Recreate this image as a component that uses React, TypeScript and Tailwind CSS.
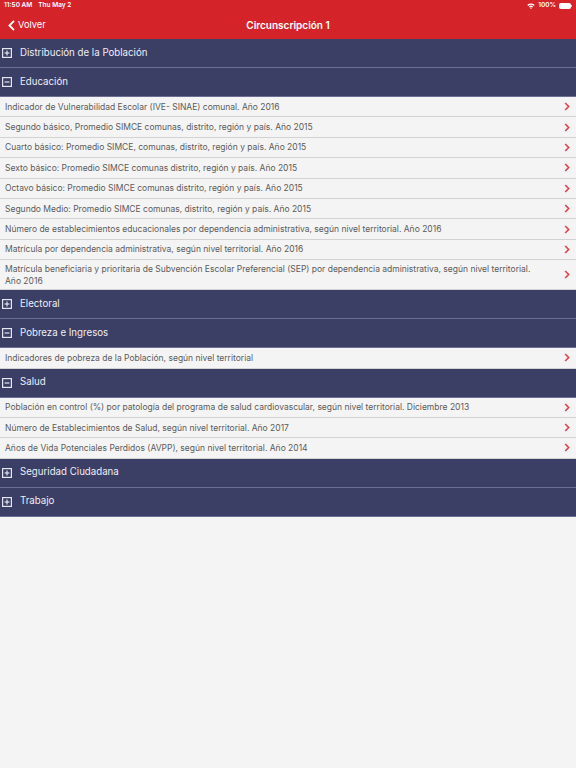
const SECTIONS: { title: string; open: boolean; items: string[] }[] = [
  { title: 'Distribución de la Población', open: false, items: [] },
  {
    title: 'Educación',
    open: true,
    items: [
      'Indicador de Vulnerabilidad Escolar (IVE- SINAE) comunal. Año 2016',
      'Segundo básico, Promedio SIMCE comunas, distrito, región y país. Año 2015',
      'Cuarto básico: Promedio SIMCE, comunas, distrito, región y país. Año 2015',
      'Sexto básico: Promedio SIMCE comunas distrito, región y país. Año 2015',
      'Octavo básico: Promedio SIMCE comunas distrito, región y país. Año 2015',
      'Segundo Medio: Promedio SIMCE comunas, distrito, región y país. Año 2015',
      'Número de establecimientos educacionales por dependencia administrativa, según nivel territorial. Año 2016',
      'Matrícula por dependencia administrativa, según nivel territorial. Año 2016',
      'Matrícula beneficiaria y prioritaria de Subvención Escolar Preferencial (SEP) por dependencia administrativa, según nivel territorial. Año 2016',
    ],
  },
  { title: 'Electoral', open: false, items: [] },
  {
    title: 'Pobreza e Ingresos',
    open: true,
    items: ['Indicadores de pobreza de la Población, según nivel territorial'],
  },
  {
    title: 'Salud',
    open: true,
    items: [
      'Población en control (%) por patología del programa de salud cardiovascular, según nivel territorial. Diciembre 2013',
      'Número de Establecimientos de Salud, según nivel territorial. Año 2017',
      'Años de Vida Potenciales Perdidos (AVPP), según nivel territorial. Año 2014',
    ],
  },
  { title: 'Seguridad Ciudadana', open: false, items: [] },
  { title: 'Trabajo', open: false, items: [] },
];

function ToggleBox({ open }: { open: boolean }) {
  return (
    <svg width="10" height="10" viewBox="0 0 10 10" className="shrink-0">
      <rect x="0.6" y="0.6" width="8.8" height="8.8" fill="none" stroke="#e6e6ee" strokeWidth="1.2" />
      <line x1="2.6" y1="5" x2="7.4" y2="5" stroke="#e6e6ee" strokeWidth="1.2" />
      {!open && <line x1="5" y1="2.6" x2="5" y2="7.4" stroke="#e6e6ee" strokeWidth="1.2" />}
    </svg>
  );
}

function Chevron() {
  return (
    <svg width="6" height="9" viewBox="0 0 6 9" className="shrink-0">
      <path d="M1.2 1 L4.6 4.5 L1.2 8" fill="none" stroke="#e0464d" strokeWidth="1.7" />
    </svg>
  );
}

export default function App() {
  return (
    <div className="min-h-[768px] w-[576px] bg-[#f4f4f4] font-['Inter',sans-serif]">
      {/* Nav bar with status strip */}
      <div className="h-[39px] bg-[#d42429] text-white">
        <div className="flex h-[11px] items-center justify-between px-[4px] text-[6.5px] font-semibold">
          <div className="flex gap-[6px]">
            <span>11:50 AM</span>
            <span>Thu May 2</span>
          </div>
          <div className="flex items-center gap-[3px]">
            <svg width="8" height="6" viewBox="0 0 8 6">
              <path d="M0.3 2 A5.5 5.5 0 0 1 7.7 2 L6.8 2.9 A4.2 4.2 0 0 0 1.2 2.9 Z" fill="#fff" />
              <path d="M1.9 3.6 A3 3 0 0 1 6.1 3.6 L5.2 4.5 A1.8 1.8 0 0 0 2.8 4.5 Z" fill="#fff" />
              <circle cx="4" cy="5.3" r="0.7" fill="#fff" />
            </svg>
            <span>100%</span>
            <div className="flex items-center">
              <div className="h-[6px] w-[12px] rounded-[1.5px] border border-white bg-white" />
              <div className="h-[2px] w-[1px] bg-white/70" />
            </div>
          </div>
        </div>
        <div className="relative flex h-[28px] items-center">
          <div className="flex items-center gap-[3px] pl-[8px] text-[9.3px]">
            <svg width="7" height="11" viewBox="0 0 7 11">
              <path d="M6 0.8 L1.4 5.5 L6 10.2" fill="none" stroke="#fff" strokeWidth="1.8" />
            </svg>
            <span>Volver</span>
          </div>
          <div className="absolute inset-x-0 text-center text-[10px] font-semibold">Circunscripción 1</div>
        </div>
      </div>

      {SECTIONS.map((s) => (
        <div key={s.title}>
          <div className="flex h-[29px] items-center gap-[8px] border-b border-[#6c6f93] bg-[#3b3e65] pl-[2px] text-[9.7px] text-[#eeeef4]">
            <ToggleBox open={s.open} />
            <span>{s.title}</span>
          </div>
          {s.items.map((item) => (
            <div
              key={item}
              className="flex min-h-[20.4px] items-center justify-between gap-[24px] border-b border-[#d3d3d3] py-[2.5px] pl-[5px] pr-[6px] text-[8.5px] leading-[12px] text-[#5b5b5b]"
            >
              <span>{item}</span>
              <Chevron />
            </div>
          ))}
        </div>
      ))}
    </div>
  );
}
